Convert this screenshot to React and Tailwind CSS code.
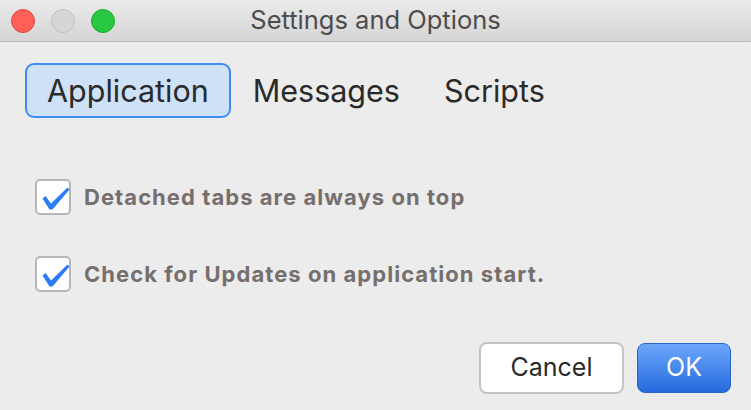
import React, { useState } from "react";

const font = { fontFamily: "Inter, 'Liberation Sans', sans-serif" };

const Check = () => (
  <svg width="36" height="36" viewBox="0 0 36 36" className="absolute inset-0">
    <path
      d="M5.5 17.5 L8.5 15 L14 22.5 L30.5 6.5 L32.5 8.5 L15.5 28.5 L12.5 28.5 Z"
      fill="#2b7cf6"
    />
  </svg>
);

const Checkbox = ({ checked, onChange, label }) => (
  <label className="flex items-center gap-[13px] cursor-pointer select-none">
    <span className="relative w-[36px] h-[36px] rounded-[5px] border-2 border-[#b7b7b7] bg-white shrink-0">
      {checked && <Check />}
    </span>
    <input type="checkbox" className="hidden" checked={checked} onChange={onChange} />
    <span className="text-[22px] font-bold text-[#766f6d] tracking-[1.05px]">{label}</span>
  </label>
);

export default function App() {
  const [tab, setTab] = useState("Application");
  const [onTop, setOnTop] = useState(true);
  const [updates, setUpdates] = useState(true);
  const tabs = ["Application", "Messages", "Scripts"];

  return (
    <div className="w-[751px] h-[410px] bg-[#ececec] flex flex-col overflow-hidden" style={font}>
      <div className="h-[42px] grid grid-cols-[1fr_auto_1fr] items-center bg-gradient-to-b from-[#ebebeb] to-[#d5d5d5] border-b border-[#b9b9b9] shrink-0">
        <div className="flex items-center gap-[16px] pl-[11px]">
          <span className="w-[24px] h-[24px] rounded-full bg-[#fe5f57] border border-[#e2463f]" />
          <span className="w-[24px] h-[24px] rounded-full bg-[#d6d6d6] border border-[#c1c1c1]" />
          <span className="w-[24px] h-[24px] rounded-full bg-[#28c840] border border-[#1aab2b]" />
        </div>
        <div className="text-[25.5px] text-[#4c4c4c] pb-[1px]">Settings and Options</div>
        <div />
      </div>

      <div className="flex pl-[25px] pt-[21px]">
        {tabs.map((t) => (
          <button
            key={t}
            onClick={() => setTab(t)}
            className={
              t === tab
                ? "h-[55px] px-[20px] rounded-[9px] border-2 border-[#3f8cf4] bg-[#cfe1f7] text-[30.5px] text-[#2a2a2a]"
                : "h-[55px] px-[20px] rounded-[9px] border-2 border-transparent text-[30.5px] text-[#2a2a2a]"
            }
          >
            {t}
          </button>
        ))}
      </div>

      <div className="flex flex-col gap-[41px] pl-[35px] pt-[61px]">
        <Checkbox checked={onTop} onChange={() => setOnTop(!onTop)} label="Detached tabs are always on top" />
        <Checkbox checked={updates} onChange={() => setUpdates(!updates)} label="Check for Updates on application start." />
      </div>

      <div className="mt-auto flex justify-end items-center gap-[13px] pr-[20px] pb-[16px]">
        <button className="w-[145px] h-[52px] rounded-[8px] bg-white border-2 border-[#c4c4c4] text-[25px] text-[#2a2a2a]">
          Cancel
        </button>
        <button className="w-[94px] h-[50px] rounded-[8px] bg-gradient-to-b from-[#6ca7fa] to-[#2469de] border border-[#2a62c8] text-[25px] text-white">
          OK
        </button>
      </div>
    </div>
  );
}
